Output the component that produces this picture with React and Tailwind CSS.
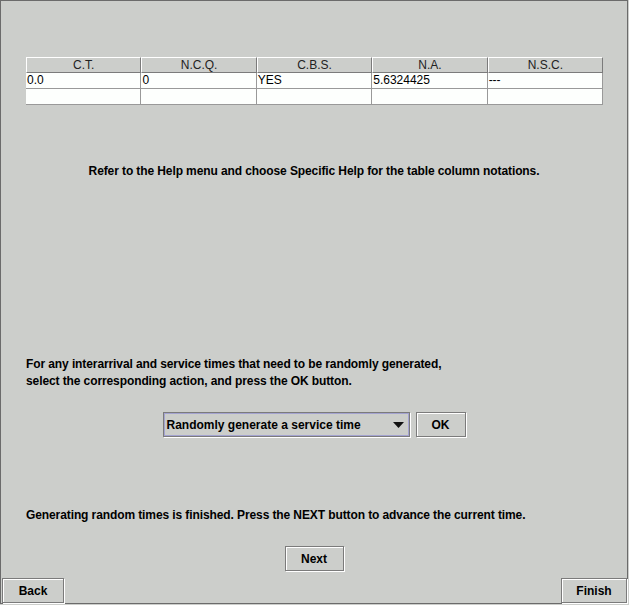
import React from "react";

const cols = ["C.T.", "N.C.Q.", "C.B.S.", "N.A.", "N.S.C."];
const row1 = ["0.0", "0", "YES", "5.6324425", "---"];

function EtchedButton({ children, className = "" }) {
  return (
    <button
      className={
        "h-[25px] border border-[#7b7b7b] bg-[#cccecb] shadow-[1px_1px_0_#ffffff,inset_1px_1px_0_#ffffff] text-[12px] font-bold text-black flex items-center justify-center " +
        className
      }
    >
      {children}
    </button>
  );
}

export default function App() {
  return (
    <div className="w-[629px] h-[605px] bg-[#cccecb] font-['Liberation_Sans',Arial,sans-serif] text-black">
      <div className="w-[628px] h-[604px] border border-[#6b6b6b] flex flex-col">
        {/* Table */}
        <div className="mt-[56px] ml-[25px] w-[577px] flex flex-col">
          <div className="flex h-[16px]">
            {cols.map((c) => (
              <div
                key={c}
                className="flex-1 border-t border-l border-t-white border-l-white border-r border-b border-r-[#7b7b7b] border-b-[#7b7b7b] bg-[#cccecb] text-[12px] leading-[15px] text-center text-[#222]"
              >
                {c}
              </div>
            ))}
          </div>
          <div className="bg-[#fdfffd] border-r border-b border-[#999999]">
            <div className="flex h-[16px] border-b border-[#999999]">
              {row1.map((v, i) => (
                <div
                  key={i}
                  className={
                    "flex-1 text-[12px] leading-[15px] pl-[1px] " +
                    (i > 0 ? "border-l border-[#999999]" : "")
                  }
                >
                  {v}
                </div>
              ))}
            </div>
            <div className="flex h-[15px]">
              {row1.map((v, i) => (
                <div
                  key={i}
                  className={"flex-1 " + (i > 0 ? "border-l border-[#999999]" : "")}
                />
              ))}
            </div>
          </div>
        </div>

        <p className="mt-[59px] text-center text-[12px] leading-[14px] font-bold tracking-[-0.1px]">
          Refer to the Help menu and choose Specific Help for the table column notations.
        </p>

        <p className="mt-[178px] ml-[25px] text-[12px] leading-[17px] font-bold tracking-[-0.1px]">
          For any interarrival and service times that need to be randomly generated,
          <br />
          select the corresponding action, and press the OK button.
        </p>

        <div className="mt-[22px] flex justify-center gap-[6px]">
          <div className="w-[247px] h-[25px] border border-[#7b7b7b] p-0 shadow-[1px_1px_0_#ffffff]">
            <div className="w-full h-full border border-[#a3a3d0] flex items-center justify-between pl-[2px] pr-[4px]">
              <span className="text-[12px] font-bold">Randomly generate a service time</span>
              <svg width="11" height="6" viewBox="0 0 11 6">
                <polygon points="0,0 11,0 5.5,6" fill="#111" />
              </svg>
            </div>
          </div>
          <EtchedButton className="w-[50px]">OK</EtchedButton>
        </div>

        <p className="mt-[71px] ml-[25px] text-[12px] leading-[14px] font-bold tracking-[-0.1px]">
          Generating random times is finished. Press the NEXT button to advance the current time.
        </p>

        <div className="mt-[24px] flex justify-center">
          <EtchedButton className="w-[59px]">Next</EtchedButton>
        </div>

        <div className="mt-auto flex justify-between pl-[1px]">
          <EtchedButton className="w-[62px]">Back</EtchedButton>
          <EtchedButton className="w-[66px]">Finish</EtchedButton>
        </div>
      </div>
    </div>
  );
}
